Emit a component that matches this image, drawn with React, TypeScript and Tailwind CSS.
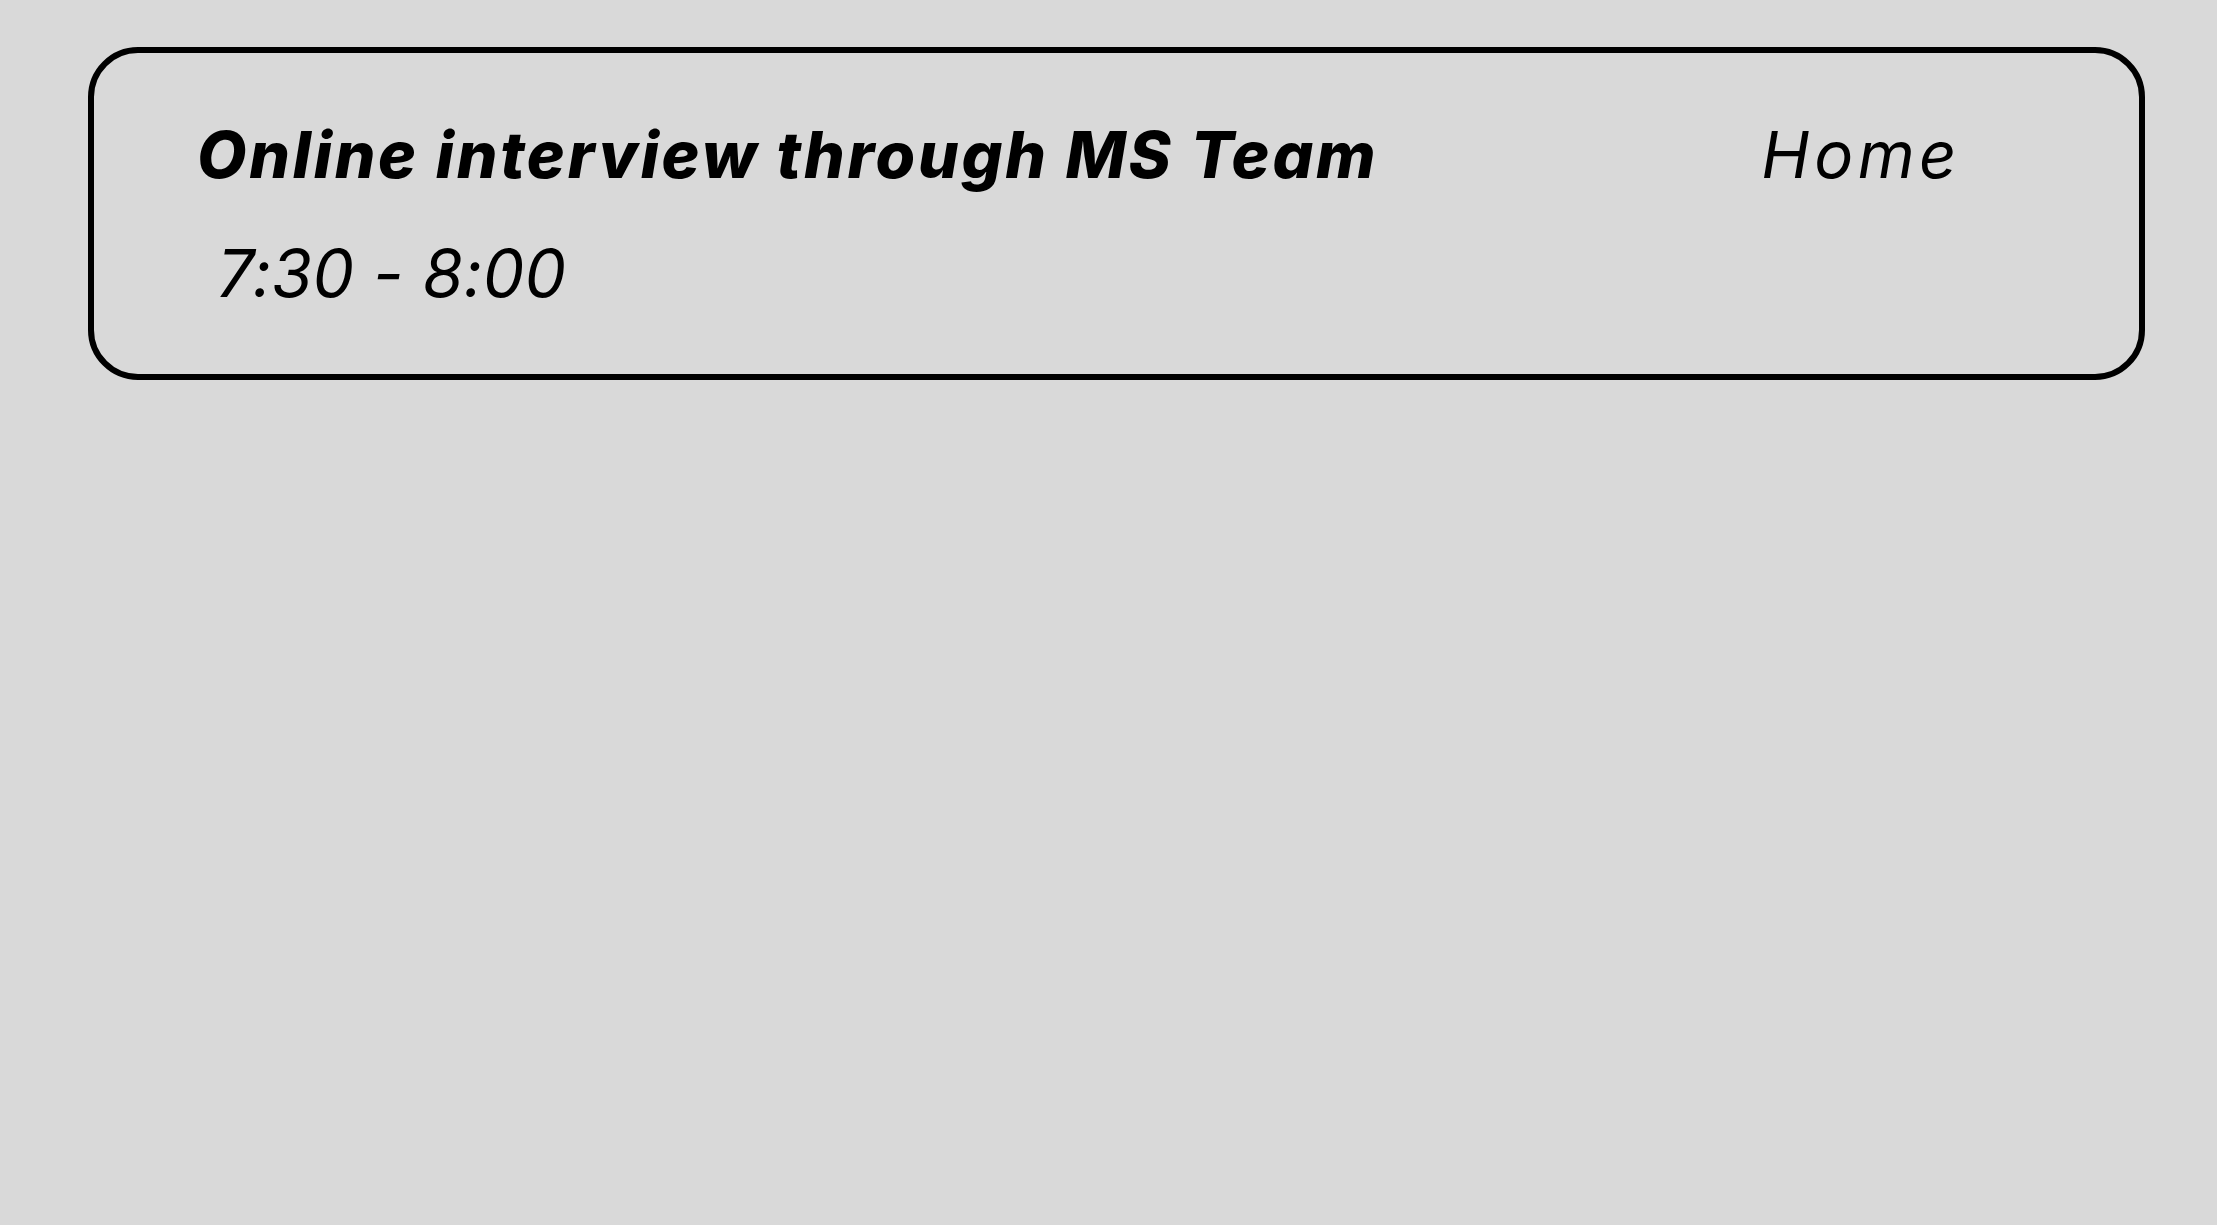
import React from 'react';

interface Appointment {
  title: string;
  time: string;
  place: string;
}

const appointment: Appointment = {
  title: 'Online interview through MS Team',
  time: '7:30 - 8:00',
  place: 'Home',
};

const AppointmentCard: React.FC<{ item: Appointment }> = ({ item }) => {
  return (
    <div className="w-[2057px] h-[333px] rounded-[50px] border-[6px] border-black pl-[103px] pr-[178px] pt-[70px]">
      <div className="flex items-start justify-between">
        <h2 className="text-[64px] leading-[64px] font-extrabold italic tracking-[2.8px] text-black">
          {item.title}
        </h2>
        <span className="text-[65px] leading-[64px] font-normal italic tracking-[4.5px] text-black">
          {item.place}
        </span>
      </div>
      <p className="mt-[53px] pl-[20px] text-[66px] leading-[66px] font-normal italic tracking-[0.2px] text-black">
        {item.time}
      </p>
    </div>
  );
};

export default function App() {
  return (
    <div className="min-h-screen w-full bg-[#d9d9d9] pl-[88px] pt-[47px] font-['Inter',sans-serif]">
      <AppointmentCard item={appointment} />
    </div>
  );
}
